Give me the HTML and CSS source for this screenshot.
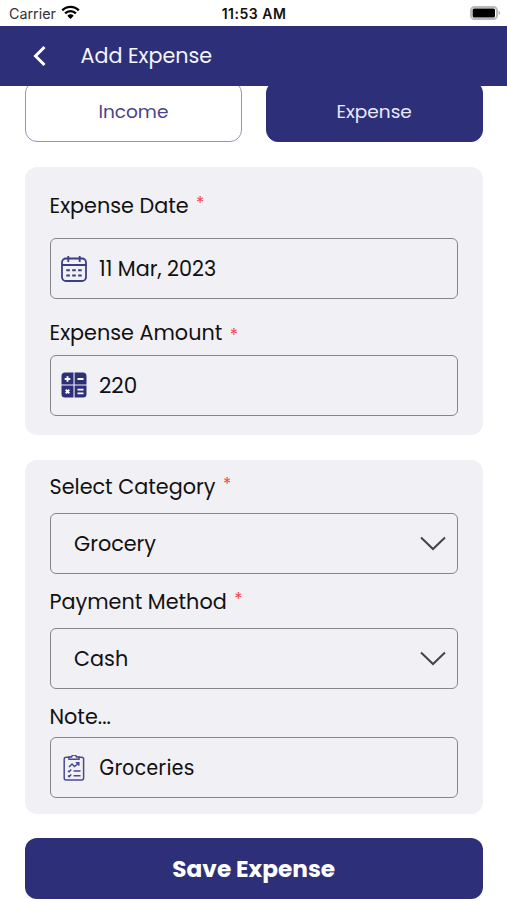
FILE: index.html
```html
<!DOCTYPE html>
<html lang="en">
<head>
  <meta charset="UTF-8" />
  <meta name="viewport" content="width=device-width, initial-scale=1.0"/>
  <title>Add Expense</title>
  <link rel="stylesheet" href="styles.css">
</head>
<body>
  <div class="status-bar">
    <div class="carrier">
      <span>Carrier</span>
      <svg width="19" height="15" viewBox="0 0 19 15">
        <path d="M1.2 5.4a11.6 11.6 0 0 1 16.6 0M4.1 8.4a7.6 7.6 0 0 1 10.8 0" fill="none" stroke="#000" stroke-width="2.3"/>
        <path d="M9.5 14 6.3 10.7a4.5 4.5 0 0 1 6.4 0z"/>
      </svg>
    </div>
    <div class="clock">11:53 AM</div>
    <svg class="battery" width="31" height="14" viewBox="0 0 31 14">
      <rect x="1" y="1" width="26" height="12" rx="3.6" fill="#fff" stroke="#b9b9b9" stroke-width="2"/>
      <rect x="2.6" y="2.4" width="22.4" height="9.2" rx="1.6"/>
      <path d="M28.6 4.8c2 .6 2 3.8 0 4.4z" fill="#b5b5b5"/>
    </svg>
  </div>

  <header class="header">
    <svg width="14" height="22" viewBox="0 0 14 22">
      <path d="M11.5 2 2.5 11l9 9" fill="none" stroke="#fff" stroke-width="3"/>
    </svg>
    <h1>Add Expense</h1>
  </header>

  <div class="tabs">
    <button class="tab">Income</button>
    <button class="tab active">Expense</button>
  </div>

  <section class="card card-amount">
    <div class="label label-date"><span>Expense Date</span><i class="star">*</i></div>
    <div class="field">
      <svg width="26" height="26" viewBox="0 0 26 26" fill="none" stroke="#3b3d86" stroke-width="1.8">
        <rect x="1" y="2.5" width="24" height="22.5" rx="4"/>
        <path d="M1 9h24M7.3 0v6M18.7 0v6"/>
        <path d="M5.3 14.2h3.6m2.3 0h3.6m2.3 0h3.6M5.3 19.6h3.6m2.3 0h3.6m2.3 0h3.6" stroke-width="2"/>
      </svg>
      <span>11 Mar, 2023</span>
    </div>
    <div class="label label-amount"><span>Expense Amount</span><i class="star">*</i></div>
    <div class="field">
      <svg width="26" height="26" viewBox="0 0 26 26" fill="#2d3078">
        <path d="M4 .5h8.5v12H.5V4A3.5 3.5 0 0 1 4 .5zM13.6.5H22A3.5 3.5 0 0 1 25.5 4v8.5H13.6zM.5 13.6h12v11.9H4A3.5 3.5 0 0 1 .5 22zM13.6 13.6h11.9V22a3.5 3.5 0 0 1-3.5 3.5h-8.4z"/>
        <path d="M6.5 4.2v5.6M3.7 7h5.6M16.5 7h6M4.7 17.700l3.600 3.600m0-3.600-3.600 3.600M16.500 17.600h6M16.500 21.400h6" stroke="#fff" stroke-width="1.9"/>
      </svg>
      <span class="amount">220</span>
    </div>
  </section>

  <section class="card card-details">
    <div class="label label-category"><span>Select Category</span><i class="star">*</i></div>
    <div class="field select">
      <span>Grocery</span>
      <svg width="26" height="15" viewBox="0 0 26 15"><path d="M1 1.5l12 11.5L25 1.5" fill="none" stroke="#444" stroke-width="2"/></svg>
    </div>
    <div class="label label-method"><span>Payment Method</span><i class="star">*</i></div>
    <div class="field select">
      <span>Cash</span>
      <svg width="26" height="15" viewBox="0 0 26 15"><path d="M1 1.5l12 11.5L25 1.5" fill="none" stroke="#444" stroke-width="2"/></svg>
    </div>
    <div class="label label-note"><span>Note...</span></div>
    <div class="field">
      <svg width="26" height="26" viewBox="0 0 26 26" fill="none" stroke="#4a4a91" stroke-width="1.5">
        <rect x="3.2" y="2.2" width="19.4" height="22.8" rx="2"/>
        <path d="M8 4.3V2h2.5a2.6 2.6 0 0 1 5 0H18v2.3z" fill="#f1f0f5"/>
        <path d="M8 12l3-3 2.5 2.5L17.8 8M14.8 7.7h3v3M7 15.8l1.2 1 2-2.2M12.5 16h7M7 20.6l1.2 1 2-2.2M12.5 20.8h7"/>
      </svg>
      <span class="note">Groceries</span>
    </div>
  </section>

  <button class="save">Save Expense</button>
</body>
</html>
```

FILE: styles.css
```css
* {
  box-sizing: border-box;
}

body {
  margin: 0;
  height: 900px;
  overflow: hidden;
  background: #fff;
  color: #111;
  font-family: Poppins, Inter, sans-serif;
}

span {
  white-space: nowrap;
}

svg {
  display: block;
  flex: none;
}

button {
  border: none;
  font-family: inherit;
}

.status-bar {
  display: grid;
  grid-template-columns: 1fr auto 1fr;
  align-items: center;
  height: 25.5px;
  padding: 2px 6px 0 9px;
  font-family: Inter, sans-serif;
  font-size: 14.3px;
}

.carrier {
  display: flex;
  align-items: center;
  gap: 5.5px;
  color: #333;
}

.carrier svg {
  margin-top: -2px;
}

.clock {
  margin-right: 2px;
  font-size: 14px;
  font-weight: 600;
  letter-spacing: 0.5px;
}

.battery {
  justify-self: end;
  margin-top: -1px;
}

.header {
  position: relative;
  z-index: 1;
  display: flex;
  align-items: center;
  gap: 33.5px;
  height: 60.5px;
  padding-left: 33px;
  background: #2d3078;
  color: #f4f5ff;
}

.header h1 {
  margin: 0;
  font-size: 20.7px;
  font-weight: 400;
}

/* the tabs are scrolled slightly under the header */
.tabs {
  display: flex;
  gap: 24px;
  margin-top: -5px;
  padding: 0 24.5px 0 25px;
}

.tab {
  flex: 1;
  height: 61px;
  padding: 0;
  border: 1px solid #9694bd;
  border-radius: 12px;
  background: #fff;
  color: #48438a;
  font-size: 18.5px;
}

.tab.active {
  border-color: #2d3078;
  background: #2d3078;
  color: #e8eaff;
}

.card {
  margin: 25px 24.5px 0 25px;
  padding: 0 24.5px;
  border-radius: 12px;
  background: #f1f0f5;
}

.card-amount {
  height: 267.5px;
}

.card-details {
  height: 354px;
}

.label {
  display: flex;
  align-items: center;
  gap: 7.5px;
  font-size: 20.75px;
  line-height: 24px;
}

.label-date {
  height: 71px;
  padding-top: 6px;
}

.label-amount {
  height: 55.5px;
  padding-top: 12px;
}

.label-category {
  height: 53.5px;
  padding-top: 1px;
}

.label-method {
  height: 54px;
  padding-top: 1px;
}

.label-note {
  height: 48px;
  padding-top: 7px;
}

.star {
  margin-top: -6px;
  color: #f44336;
  font-size: 17px;
  font-style: normal;
}

.label-amount .star {
  margin-top: 4px;
}

.field {
  display: flex;
  align-items: center;
  gap: 12px;
  height: 61px;
  padding: 0 11px 0 10.5px;
  border: 1px solid #85858b;
  border-radius: 6px;
  font-size: 20.75px;
}

.amount {
  font-size: 21.5px;
}

.note {
  font-family: Inter, sans-serif;
  font-size: 20.75px;
}

.select {
  justify-content: space-between;
  padding-left: 23.5px;
}

.save {
  display: block;
  width: 457.5px;
  height: 61px;
  margin: 24.5px 0 0 25px;
  border-radius: 12px;
  background: #2d3078;
  color: #fff;
  font-size: 23.2px;
  font-weight: 700;
}
```
